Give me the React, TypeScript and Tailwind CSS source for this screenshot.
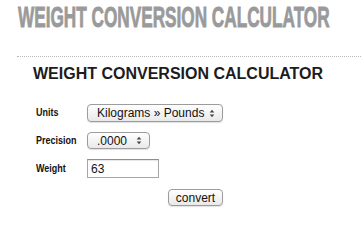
import React from "react";

const sans = "font-['Liberation_Sans',Arial,sans-serif]";

function Arrows() {
  return (
    <svg width="6" height="9" viewBox="0 0 6 9" className="shrink-0">
      <path d="M3 0.8 L5.3 3.6 L0.7 3.6 Z" fill="#444" />
      <path d="M3 8.2 L5.3 5.4 L0.7 5.4 Z" fill="#444" />
    </svg>
  );
}

function FakeSelect({ value, width, height }: { value: string; width: string; height: string }) {
  return (
    <div
      className={`${width} ${height} flex items-center justify-between pl-[9px] pr-[7px] rounded-[4px] border border-[#9c9c9c] bg-gradient-to-b from-white to-[#e9e9e9] shadow-[0_1px_1px_rgba(0,0,0,0.12)] text-[12px] text-[#111] ${sans}`}
    >
      <span className="leading-none">{value}</span>
      <Arrows />
    </div>
  );
}

function Label({ children }: { children: React.ReactNode }) {
  return (
    <span className={`inline-block origin-left scale-x-[0.78] text-[11.5px] font-bold leading-none text-[#111] ${sans}`}>
      {children}
    </span>
  );
}

export default function App() {
  return (
    <div className="w-[361px] h-[225px] overflow-hidden bg-white">
      <div className="pl-[17px]">
        <h1 className="h-[36px] pt-[1px] pl-[1px] whitespace-nowrap">
          <span
            className={`block origin-top scale-y-[1.74] text-[17.2px] font-bold leading-[19.2px] text-[#9a9a9a] [-webkit-text-stroke:0.5px_#9a9a9a] ${sans}`}
          >
            WEIGHT CONVERSION CALCULATOR
          </span>
        </h1>
        <div className="mt-[20px] border-t border-dotted border-[#b8b8b8]" />
      </div>

      <div className="pl-[33px] pt-[9px]">
        <h2 className={`text-[16px] font-bold leading-none text-[#1c1c1c] whitespace-nowrap ${sans}`}>
          WEIGHT CONVERSION CALCULATOR
        </h2>
      </div>

      <form className="ml-[36px] mt-[22px] w-[187px] flex flex-col">
        <div className="grid grid-cols-[51px_auto] items-center gap-y-[10px]">
          <Label>Units</Label>
          <FakeSelect value="Kilograms » Pounds" width="w-[136px]" height="h-[18px]" />
          <Label>Precision</Label>
          <FakeSelect value=".0000" width="w-[63px]" height="h-[17px]" />
          <Label>Weight</Label>
          <div
            className={`w-[72px] h-[19px] flex items-center pl-[3px] border border-[#a6a6a6] border-t-[#8e8e8e] bg-white shadow-[inset_0_1px_1px_rgba(0,0,0,0.1)] text-[12px] text-[#111] ${sans}`}
          >
            63
          </div>
        </div>
        <button
          type="button"
          className={`self-end mt-[11px] w-[55px] h-[17px] flex items-center justify-center rounded-[4px] border border-[#9c9c9c] bg-gradient-to-b from-white to-[#e9e9e9] shadow-[0_1px_1px_rgba(0,0,0,0.12)] text-[12px] leading-none text-[#111] ${sans}`}
        >
          convert
        </button>
      </form>
    </div>
  );
}
